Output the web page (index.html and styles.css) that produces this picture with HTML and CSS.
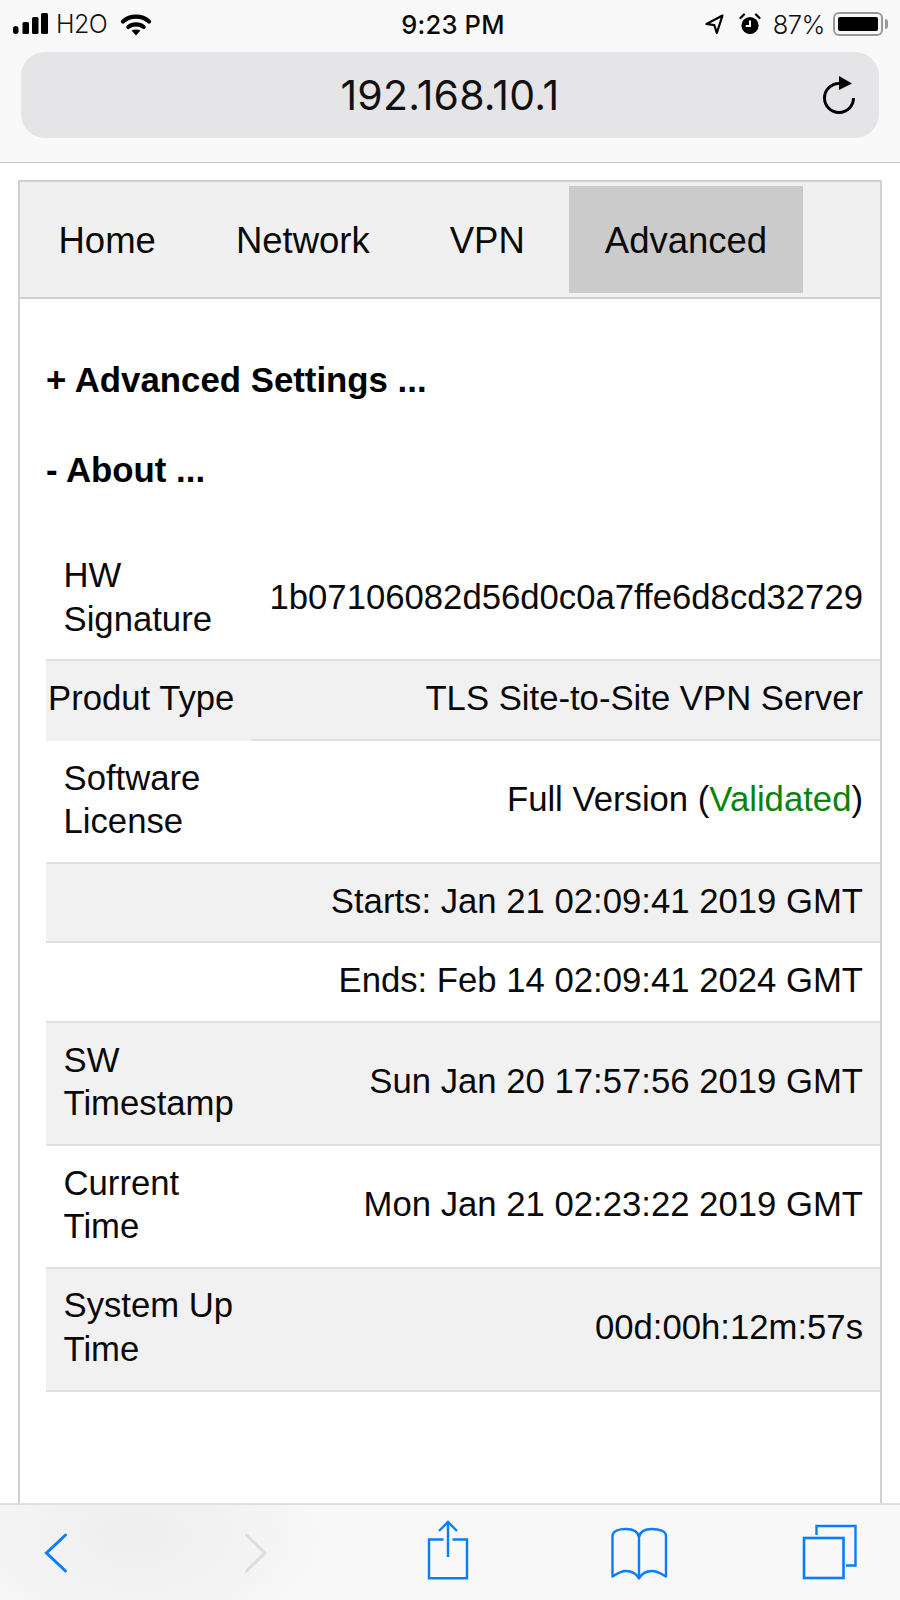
FILE: index.html
```html
<!DOCTYPE html>
<html lang="en">
<head>
<meta charset="utf-8">
<title>192.168.10.1</title>
<link rel="stylesheet" href="styles.css">
</head>
<body>
<div class="phone">
  <header class="chrome">
    <div class="status">
      <div class="status-left">
        <svg class="signal" width="36" height="24" viewBox="0 0 36 24"><rect x="0" y="14" width="5.5" height="8" rx="2.7"/><rect x="9.5" y="10" width="6.5" height="12" rx="1.5"/><rect x="19" y="5" width="6.5" height="17" rx="1.5"/><rect x="28" y="1" width="7" height="21" rx="1.5"/></svg>
        <span class="carrier">H2O</span>
        <svg class="wifi" width="32" height="24" viewBox="0 0 32 24"><path d="M3 9.5C10 3 22 3 29 9.5" fill="none" stroke="#000" stroke-width="4.2" stroke-linecap="round"/><path d="M8.3 15C12.5 11.5 19.5 11.5 23.7 15" fill="none" stroke="#000" stroke-width="4.2" stroke-linecap="round"/><path d="M11.5 18.5C14 17 18 17 20.5 18.5L16 23.5Z"/></svg>
      </div>
      <div class="clock">9:23 PM</div>
      <div class="status-right">
        <svg class="locate" width="20" height="22" viewBox="0 0 20 22"><path d="M18.5 2.5L2.5 11L10.3 12.2L12.8 20Z" fill="none" stroke="#000" stroke-width="2.2" stroke-linejoin="round"/></svg>
        <svg class="alarm" width="22" height="22" viewBox="0 0 22 22"><circle cx="11" cy="12.5" r="8.6"/><path d="M11 7.5V13H6.8" fill="none" stroke="#fff" stroke-width="2"/><path d="M1.5 5L5 1.5M20.5 5L17 1.5" stroke="#000" stroke-width="2.2" stroke-linecap="round"/></svg>
        <span class="percent">87%</span>
        <div class="battery"><div class="battery-level"></div></div>
      </div>
    </div>
    <div class="urlbar">
      <span class="url">192.168.10.1</span>
      <svg class="reload" width="36" height="42" viewBox="0 0 36 42"><path d="M18 9.500A14.500 14.500 0 1 0 32.500 24" fill="none" stroke="#000" stroke-width="3"/><path d="M18 2L31 9.500L18 16Z"/></svg>
    </div>
  </header>

  <main class="card">
    <nav class="tabs">
      <a class="tab">Home</a>
      <a class="tab">Network</a>
      <a class="tab">VPN</a>
      <a class="tab tab-active">Advanced</a>
    </nav>
    <section class="content">
      <h3 class="section-title">+ Advanced Settings ...</h3>
      <h3 class="section-title section-open">- About ...</h3>
      <table class="about">
        <tr><td class="label">HW Signature</td><td class="value">1b07106082d56d0c0a7ffe6d8cd32729</td></tr>
        <tr class="alt"><td class="label label-tight">Produt Type</td><td class="value">TLS Site-to-Site VPN Server</td></tr>
        <tr><td class="label">Software License</td><td class="value">Full Version (<span class="ok">Validated</span>)</td></tr>
        <tr class="alt"><td class="label"></td><td class="value">Starts: Jan 21 02:09:41 2019 GMT</td></tr>
        <tr><td class="label"></td><td class="value">Ends: Feb 14 02:09:41 2024 GMT</td></tr>
        <tr class="alt"><td class="label">SW Timestamp</td><td class="value">Sun Jan 20 17:57:56 2019 GMT</td></tr>
        <tr><td class="label">Current Time</td><td class="value">Mon Jan 21 02:23:22 2019 GMT</td></tr>
        <tr class="alt"><td class="label">System Up Time</td><td class="value">00d:00h:12m:57s</td></tr>
      </table>
    </section>
  </main>

  <footer class="toolbar">
    <svg class="tool" width="60" height="70" viewBox="0 0 60 70"><path d="M40.500 20L21.500 38L40.500 56" fill="none" stroke="#0a7dff" stroke-width="3" stroke-linecap="round" stroke-linejoin="miter"/></svg>
    <svg class="tool tool-forward" width="60" height="70" viewBox="0 0 60 70"><path d="M20.500 20L39 38L20.500 56" fill="none" stroke="#dcdcdc" stroke-width="3" stroke-linecap="round"/></svg>
    <svg class="tool" width="60" height="70" viewBox="0 0 60 70"><path d="M25.500 24.500H11V63.200H49V24.500H34.500" fill="none" stroke="#0a7dff" stroke-width="2.400"/><path d="M30 7.500V42M21 16L30 7L39 16" fill="none" stroke="#0a7dff" stroke-width="2.400"/></svg>
    <svg class="tool" width="60" height="70" viewBox="0 0 60 70"><path d="M30 63.500C27 58 23 56 17 56C12 56 8 58.500 3.500 61.500V21C3.500 16 10 14 17 14C24 14 29 17 30 22C31 17 36 14 43 14C50 14 57 16 57 21V61.500C52 58.500 48 56 43 56C37 56 33 58 30 63.500ZM30 22V63" fill="none" stroke="#0a7dff" stroke-width="2.400" stroke-linejoin="round"/></svg>
    <svg class="tool" width="60" height="70" viewBox="0 0 60 70"><rect x="4" y="23" width="39.500" height="40" fill="none" stroke="#0a7dff" stroke-width="2.600"/><path d="M16.500 20V11H55.500V50.500H46" fill="none" stroke="#0a7dff" stroke-width="2.400"/></svg>
  </footer>
</div>
</body>
</html>
```

FILE: styles.css
```css
* { box-sizing: border-box; }

html, body {
  margin: 0;
  padding: 0;
  background: #fff;
}

.phone {
  width: 900px;
  height: 1600px;
  display: flex;
  flex-direction: column;
  overflow: hidden;
  font-family: "Liberation Sans", Arial, sans-serif;
  color: #0a0a0a;
}

.chrome {
  height: 163px;
  flex: none;
  background: #f9f9f9;
  border-bottom: 1.5px solid #c4c4c4;
  font-family: Inter, "Noto Sans", sans-serif;
}

.status {
  height: 48px;
  display: grid;
  grid-template-columns: 1fr auto 1fr;
  align-items: center;
  padding: 0 17px 0 13px;
}

.status-left, .status-right {
  display: flex;
  align-items: center;
}

.status-right { justify-content: flex-end; }

.signal { margin-right: 7px; }

.carrier {
  font-size: 25px;
  font-weight: 300;
  letter-spacing: -0.5px;
  color: #111;
}

.wifi { margin-left: 13px; }

.clock {
  margin-left: 10px;
  font-size: 25.5px;
  font-weight: 500;
  letter-spacing: 0.2px;
}

.locate { margin-right: 15px; }
.alarm { margin-right: 12px; }

.percent {
  font-size: 25.5px;
  font-weight: 300;
  letter-spacing: -0.5px;
  color: #111;
  margin-right: 8px;
}

.battery {
  position: relative;
  width: 50px;
  height: 24px;
  padding: 3px;
  border: 2px solid #999;
  border-radius: 6px;
}

.battery::after {
  content: "";
  position: absolute;
  right: -7px;
  top: 5px;
  width: 3px;
  height: 10px;
  border-radius: 0 3px 3px 0;
  background: #999;
}

.battery-level {
  width: 40px;
  height: 14px;
  border-radius: 2px;
  background: #000;
}

.urlbar {
  position: relative;
  height: 86px;
  margin: 4px 21px 0;
  border-radius: 24px;
  background: #e5e5e8;
  display: flex;
  align-items: center;
  justify-content: center;
}

.url {
  font-size: 41px;
  letter-spacing: 0.2px;
  font-weight: 400;
  color: #111;
}

.reload {
  position: absolute;
  right: 22px;
  top: 22px;
}

.card {
  flex: 1;
  min-height: 0;
  margin: 17px 18px 0;
  border: 2px solid #d0d0d0;
  border-bottom: none;
  display: flex;
  flex-direction: column;
}

.tabs {
  display: flex;
  gap: 9px;
  padding: 4px 4px 4px 3px;
  background: #f0f0f0;
  border-bottom: 2px solid #d0d0d0;
}

.tab {
  padding: 2px 35.5px 0;
  font-size: 36.5px;
  line-height: 105px;
}

.tab-active { background: #cbcbcb; }

.content {
  padding: 59px 0 0 26px;
}

.section-title {
  margin: 0 0 46.5px;
  font-size: 34.8px;
  line-height: 43.5px;
  font-weight: 700;
  color: #000;
}

.section-open { margin-bottom: 47px; }

.about {
  width: 834px;
  table-layout: fixed;
  border-collapse: separate;
  border-spacing: 0;
  font-size: 34.7px;
  line-height: 43.5px;
}

.about td {
  padding: 15.6px 17px 18.4px;
  border-bottom: 2px solid #e0e0e0;
}

.about .label {
  width: 205px;
  padding-left: 17.5px;
  padding-right: 0;
}

.about .label-tight {
  padding-left: 2px;
  border-bottom-color: transparent;
  white-space: nowrap;
}

.value {
  text-align: right;
  white-space: nowrap;
}

.alt td { background: #f1f1f1; }

.ok { color: #0a820a; }

.toolbar {
  height: 97px;
  flex: none;
  display: flex;
  align-items: flex-start;
  gap: 131px;
  padding: 10px 0 0 25px;
  border-top: 2px solid #dfdfdf;
  background: radial-gradient(ellipse 190px 110px at 135px 30px, #eeeeee 0%, #f3f3f3 60%, #f8f8f8 100%);
}

.tool { flex: none; }

.tool-forward {
  margin-left: 10px;
  margin-right: 1px;
}
```
